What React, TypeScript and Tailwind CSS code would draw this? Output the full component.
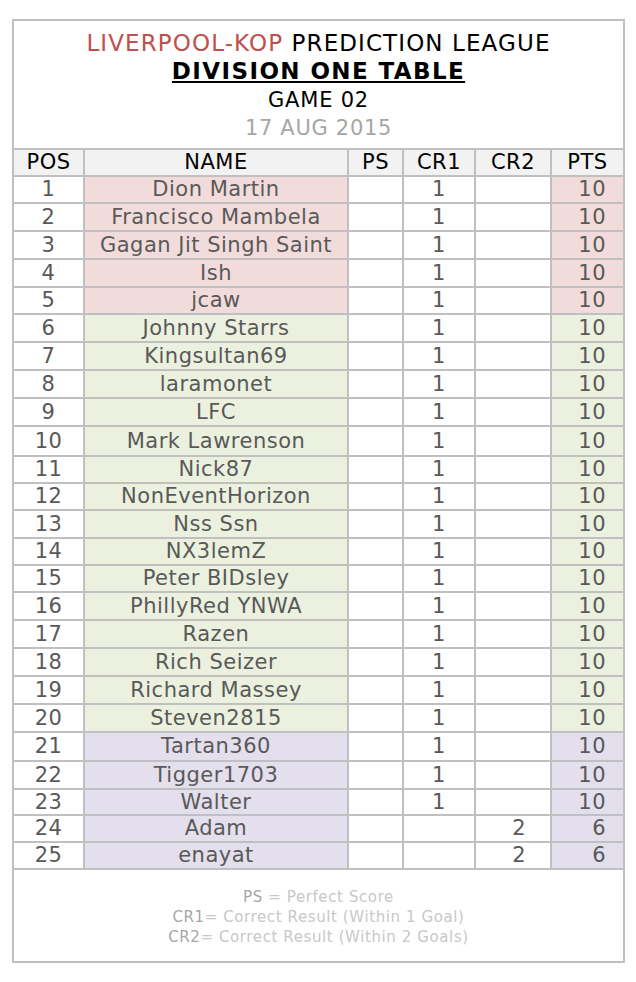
import React from "react";

type Row = { pos: number; name: string; ps?: string; cr1?: string; cr2?: string; pts: string; h: number; group: "red" | "green" | "purple" };

const names = [
  "Dion Martin", "Francisco Mambela", "Gagan Jit Singh Saint", "Ish", "jcaw",
  "Johnny Starrs", "Kingsultan69", "laramonet", "LFC", "Mark Lawrenson",
  "Nick87", "NonEventHorizon", "Nss Ssn", "NX3lemZ", "Peter BIDsley",
  "PhillyRed YNWA", "Razen", "Rich Seizer", "Richard Massey", "Steven2815",
  "Tartan360", "Tigger1703", "Walter", "Adam", "enayat",
];

const heights = [27, 28, 28, 28, 27, 28, 28, 28, 28, 30, 27, 27, 28, 27, 27, 28, 28, 28, 28, 28, 29, 28, 26, 27, 27];

const rows: Row[] = names.map((name, i) => {
  const pos = i + 1;
  const group = pos <= 5 ? "red" : pos <= 20 ? "green" : "purple";
  const late = pos >= 24;
  return {
    pos,
    name,
    cr1: late ? "" : "1",
    cr2: late ? "2" : "",
    pts: late ? "6" : "10",
    h: heights[i],
    group,
  };
});

const groupBg: Record<Row["group"], string> = {
  red: "bg-[#f2dcdb]",
  green: "bg-[#ebf1de]",
  purple: "bg-[#e4dfec]",
};

export default function App() {
  return (
    <div className="min-h-[982px] bg-white pt-[19px] pl-[12px]" style={{ fontFamily: '"DejaVu Sans", Verdana, sans-serif' }}>
      <div className="w-[613px] border-2 border-[#c0c0c0]">
        {/* Title block */}
        <div className="text-center pt-[8px] h-[127px]">
          <p className="text-[23px] leading-[28px] tracking-[1.1px] text-black">
            <span className="text-[#c0504d]">LIVERPOOL-KOP</span> PREDICTION LEAGUE
          </p>
          <p className="text-[23px] leading-[28px] tracking-[1.4px] font-bold underline text-black">DIVISION ONE TABLE</p>
          <p className="text-[21px] leading-[30px] tracking-[0.8px] text-black">GAME 02</p>
          <p className="text-[21px] leading-[26px] tracking-[0.7px] text-[#a6a6a6]">17 AUG 2015</p>
        </div>

        {/* Table */}
        <table className="w-full table-fixed border-collapse text-[21px] tracking-[0.5px] text-[#595959]">
          <colgroup>
            <col className="w-[70px]" />
            <col className="w-[264px]" />
            <col className="w-[55px]" />
            <col className="w-[72px]" />
            <col className="w-[76px]" />
            <col />
          </colgroup>
          <thead>
            <tr className="h-[27px] bg-[#f2f2f2] text-black">
              <th className="border-2 border-l-0 border-[#c0c0c0] font-normal p-0 leading-none">POS</th>
              <th className="border-2 border-[#c0c0c0] font-normal p-0 leading-none">NAME</th>
              <th className="border-2 border-[#c0c0c0] font-normal p-0 leading-none">PS</th>
              <th className="border-2 border-[#c0c0c0] font-normal p-0 leading-none">CR1</th>
              <th className="border-2 border-[#c0c0c0] font-normal p-0 leading-none">CR2</th>
              <th className="border-2 border-r-0 border-[#c0c0c0] font-normal p-0 leading-none">PTS</th>
            </tr>
          </thead>
          <tbody>
            {rows.map((r) => (
              <tr key={r.pos} style={{ height: r.h }}>
                <td className="border-2 border-l-0 border-[#c0c0c0] text-center p-0 leading-none">{r.pos}</td>
                <td className={`border-2 border-[#c0c0c0] text-center p-0 leading-none ${groupBg[r.group]}`}>{r.name}</td>
                <td className="border-2 border-[#c0c0c0] text-center p-0 leading-none">{r.ps}</td>
                <td className="border-2 border-[#c0c0c0] text-center p-0 leading-none">{r.cr1}</td>
                <td className="border-2 border-[#c0c0c0] text-right pr-[24px] p-0 leading-none">{r.cr2}</td>
                <td className={`border-2 border-r-0 border-[#c0c0c0] text-right pr-[17px] p-0 leading-none ${groupBg[r.group]}`}>{r.pts}</td>
              </tr>
            ))}
          </tbody>
        </table>

        {/* Legend */}
        <div className="h-[91px] pt-[17px] text-center text-[15px] leading-[20px] tracking-[0.6px] text-[#c8c8c8]">
          <p><span className="text-[#a6a6a6]">PS</span> = Perfect Score</p>
          <p><span className="text-[#a6a6a6]">CR1</span>= Correct Result (Within 1 Goal)</p>
          <p><span className="text-[#a6a6a6]">CR2</span>= Correct Result (Within 2 Goals)</p>
        </div>
      </div>
    </div>
  );
}
